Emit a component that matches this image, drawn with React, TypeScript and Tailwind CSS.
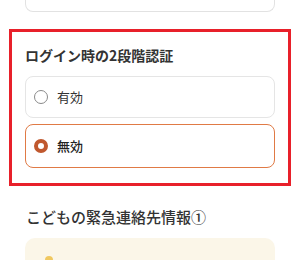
import React from "react";

export default function App() {
  const font = { fontFamily: '"Noto Sans CJK JP", "Noto Sans", sans-serif' };
  return (
    <div className="w-[300px] h-[260px] overflow-hidden bg-white" style={font}>
      <div className="mx-[25px] h-[12px] rounded-b-[8px] border border-t-0 border-[#e2e2e2]" />
      <div className="mt-[17px] mx-[9px] border-[3px] border-[#e8202a] px-[13px] pt-[13px] pb-[15px]">
        <div className="text-[14px] font-bold text-[#333] leading-[20px]">ログイン時の2段階認証</div>
        <div className="mt-[11px] flex flex-col gap-[6px]">
          <div className="h-[42px] rounded-[8px] border border-[#e5e5e5] flex items-center px-[8px]">
            <span className="w-[14px] h-[14px] rounded-full border border-[#8a8a8a] bg-white" />
            <span className="ml-[9px] text-[13px] text-[#333]">有効</span>
          </div>
          <div className="h-[44px] rounded-[8px] border-[1.5px] border-[#e07a45] flex items-center px-[8px]">
            <span className="w-[14px] h-[14px] rounded-full border-[4.5px] border-[#c0582e] bg-white" />
            <span className="ml-[9px] text-[13px] text-[#222] font-medium">無効</span>
          </div>
        </div>
      </div>
      <div className="mt-[20px] px-[26px] text-[15px] font-medium text-[#333] leading-[22px]">こどもの緊急連絡先情報①</div>
      <div className="relative mt-[10px] mx-[25px] h-[60px] rounded-[10px] bg-[#fbf6e8]">
        <span className="absolute left-[20px] top-[18px] w-[8px] h-[8px] rounded-full bg-[#f0c860]" />
      </div>
    </div>
  );
}
